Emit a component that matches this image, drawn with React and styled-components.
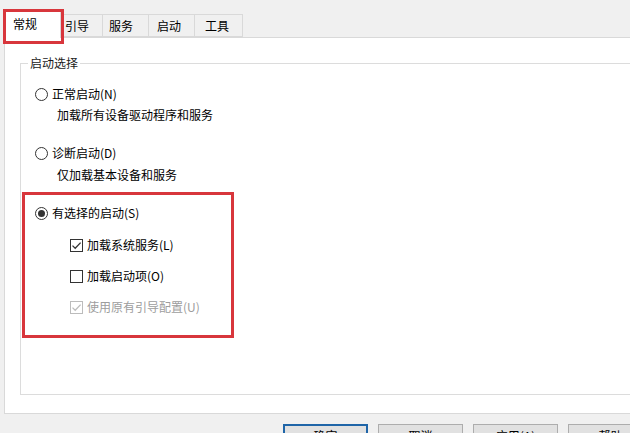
import React from "react";
import styled, { createGlobalStyle } from "styled-components";

const Global = createGlobalStyle`
  html, body { margin: 0; padding: 0; background: #f0f0f0; }
  body {
    font-family: "Noto Sans CJK SC", "Microsoft YaHei", "Noto Sans", sans-serif;
    font-size: 12px;
    color: #000;
  }
`;

const Window = styled.div`
  width: 664px;
  height: 433px;
  overflow: hidden;
  background: #f0f0f0;
  display: flex;
  flex-direction: column;
  & > * { flex: none; }
`;

const Viewport = styled.div`
  width: 630px;
  height: 433px;
  overflow: hidden;
`;

const TabStrip = styled.div`
  display: flex;
  align-items: flex-end;
  height: 37px;
  padding-left: 4px;
  position: relative;
  z-index: 2;
`;

const Tab = styled.div`
  box-sizing: border-box;
  position: relative;
  width: ${(p) => p.$w}px;
  height: ${(p) => (p.$active ? 28 : 23)}px;
  margin-bottom: ${(p) => (p.$active ? -1 : 0)}px;
  margin-left: ${(p) => (p.$first ? 0 : -1)}px;
  padding-left: ${(p) => p.$pl}px;
  background: ${(p) => (p.$active ? "#fff" : "#f0f0f0")};
  border: 1px solid #d9d9d9;
  border-bottom: ${(p) => (p.$active ? "none" : "1px solid #d9d9d9")};
  line-height: ${(p) => (p.$active ? 26 : 22)}px;
  z-index: ${(p) => (p.$active ? 1 : 0)};
  white-space: nowrap;
`;

const TabHighlight = styled.div`
  position: absolute;
  left: -2px;
  top: -2px;
  width: 61px;
  height: 35px;
  box-sizing: border-box;
  border: 3px solid #d8363c;
  z-index: 3;
`;

const Panel = styled.div`
  box-sizing: border-box;
  margin-left: 4px;
  width: 640px;
  height: 377px;
  background: #fff;
  border: 1px solid #d9d9d9;
  padding: 17px 0 0 15px;
`;

const GroupBox = styled.fieldset`
  box-sizing: border-box;
  margin: 0;
  padding: 0;
  width: 640px;
  height: 340px;
  border: 1px solid #dcdcdc;
  border-radius: 0;
  min-width: 0;
`;

const GroupTitle = styled.legend`
  margin-left: 7px;
  padding: 0 2px;
  line-height: 16px;
  color: #1a1a1a;
`;

const GroupContent = styled.div`
  display: flex;
  flex-direction: column;
  align-items: flex-start;
  padding: 15px 0 0 0;
`;

const Line = styled.div`
  display: flex;
  align-items: center;
  height: 16px;
  line-height: 16px;
  margin-top: ${(p) => p.$mt || 0}px;
  padding-left: ${(p) => p.$indent || 0}px;
  color: ${(p) => (p.$disabled ? "#9d9d9d" : "#000")};
  white-space: nowrap;
`;

const Radio = styled.span`
  box-sizing: border-box;
  width: 13px;
  height: 13px;
  border-radius: 50%;
  border: 1px solid #333;
  background: #fff;
  margin-right: 4px;
  display: flex;
  align-items: center;
  justify-content: center;
  flex: none;
  &::after {
    content: "";
    display: ${(p) => (p.$checked ? "block" : "none")};
    width: 7px;
    height: 7px;
    border-radius: 50%;
    background: #333;
  }
`;

const Box = styled.span`
  box-sizing: border-box;
  width: 13px;
  height: 13px;
  border: 1px solid ${(p) => (p.$disabled ? "#bcbcbc" : "#333")};
  background: #fff;
  margin-right: 4px;
  display: flex;
  align-items: center;
  justify-content: center;
  flex: none;
`;

const Highlight = styled.div`
  box-sizing: border-box;
  width: 212px;
  height: 146px;
  margin: 9px 0 0 1px;
  border: 3px solid #d8363c;
  padding: 10px 0 0 10px;
  display: flex;
  flex-direction: column;
  align-items: flex-start;
`;

const ButtonRow = styled.div`
  display: flex;
  justify-content: flex-end;
  gap: 10px;
  padding-right: 11px;
  margin-top: 10px;
`;

const Button = styled.div`
  box-sizing: border-box;
  width: 85px;
  height: 24px;
  flex: none;
  background: #e1e1e1;
  border: ${(p) => (p.$default ? "2px solid #1f65a8" : "1px solid #adadad")};
  display: flex;
  align-items: center;
  justify-content: center;
  line-height: 16px;
`;

function Check({ disabled }) {
  return (
    <svg width="11" height="11" viewBox="0 0 11 11">
      <path
        d="M1.5 5.6 L4.2 8.3 L9.6 2.6"
        fill="none"
        stroke={disabled ? "#bcbcbc" : "#333"}
        strokeWidth="1.3"
      />
    </svg>
  );
}

const tabs = [
  { label: "常规", w: 57, pl: 8, active: true },
  { label: "引导", w: 43, pl: 4 },
  { label: "服务", w: 47, pl: 6 },
  { label: "启动", w: 47, pl: 8 },
  { label: "工具", w: 49, pl: 10 },
];

export default function App() {
  return (
    <Viewport>
      <Global />
      <Window>
        <TabStrip>
          {tabs.map((t, i) => (
            <Tab key={t.label} $w={t.w} $pl={t.pl} $active={t.active} $first={i === 0}>
              {t.label}
              {t.active && <TabHighlight />}
            </Tab>
          ))}
        </TabStrip>
        <Panel>
          <GroupBox>
            <GroupTitle>启动选择</GroupTitle>
            <GroupContent>
              <Line $indent={14}>
                <Radio />
                正常启动(N)
              </Line>
              <Line $indent={36} $mt={5}>
                加载所有设备驱动程序和服务
              </Line>
              <Line $indent={14} $mt={22}>
                <Radio />
                诊断启动(D)
              </Line>
              <Line $indent={36} $mt={6}>
                仅加载基本设备和服务
              </Line>
              <Highlight>
                <Line>
                  <Radio $checked />
                  有选择的启动(S)
                </Line>
                <Line $indent={35} $mt={16}>
                  <Box>
                    <Check />
                  </Box>
                  加载系统服务(L)
                </Line>
                <Line $indent={35} $mt={15}>
                  <Box />
                  加载启动项(O)
                </Line>
                <Line $indent={35} $mt={15} $disabled>
                  <Box $disabled>
                    <Check disabled />
                  </Box>
                  使用原有引导配置(U)
                </Line>
              </Highlight>
            </GroupContent>
          </GroupBox>
        </Panel>
        <ButtonRow>
          <Button $default>确定</Button>
          <Button>取消</Button>
          <Button>应用(A)</Button>
          <Button>帮助</Button>
        </ButtonRow>
      </Window>
    </Viewport>
  );
}
